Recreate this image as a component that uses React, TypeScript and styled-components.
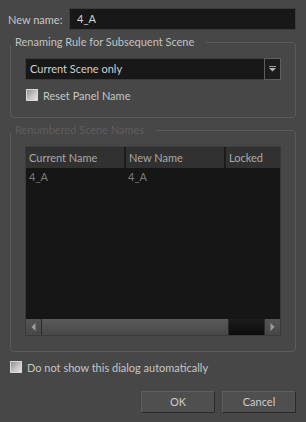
import React from 'react';
import styled, { createGlobalStyle } from 'styled-components';

const GlobalStyle = createGlobalStyle`
  html, body {
    margin: 0;
    padding: 0;
    background: #474747;
  }
  body {
    font-family: Lato, 'Open Sans', sans-serif;
    font-size: 11px;
    color: #c6c6c6;
  }
`;

export default function App() {
  return (
    <>
      <GlobalStyle />
      <Dialog>
        <NameRow>
          <Label>New name:</Label>
          <TextInput>4_A</TextInput>
        </NameRow>

        <Group>
          <Legend>Renaming Rule for Subsequent Scene</Legend>
          <Combo>
            <ComboText>Current Scene only</ComboText>
            <ComboButton>
              <svg width="9" height="7" viewBox="0 0 9 7">
                <rect x="1" y="0" width="7" height="1" fill="#9a9a9a" />
                <path d="M1 2 L8 2 L4.5 5.5 Z" fill="#b4b4b4" />
              </svg>
            </ComboButton>
          </Combo>
          <CheckRow>
            <CheckBox />
            <span>Reset Panel Name</span>
          </CheckRow>
        </Group>

        <Group $disabled>
          <Legend $disabled>Renumbered Scene Names</Legend>
          <Table>
            <HeaderRow>
              <HeaderCell $width={100}>Current Name</HeaderCell>
              <HeaderCell $width={100}>New Name</HeaderCell>
              <HeaderCell $width={55} $last>Locked</HeaderCell>
            </HeaderRow>
            <Body>
              <BodyRow>
                <BodyCell $width={100}>4_A</BodyCell>
                <BodyCell $width={100}>4_A</BodyCell>
                <BodyCell $width={55} />
              </BodyRow>
            </Body>
            <ScrollBar>
              <ScrollButton>
                <svg width="5" height="8" viewBox="0 0 5 8">
                  <path d="M4.5 0 L0.5 4 L4.5 8 Z" fill="#9c9c9c" />
                </svg>
              </ScrollButton>
              <ScrollHandle />
              <ScrollTrack />
              <ScrollButton>
                <svg width="5" height="8" viewBox="0 0 5 8">
                  <path d="M0.5 0 L4.5 4 L0.5 8 Z" fill="#9c9c9c" />
                </svg>
              </ScrollButton>
            </ScrollBar>
          </Table>
        </Group>

        <CheckRow $outer>
          <CheckBox />
          <span>Do not show this dialog automatically</span>
        </CheckRow>

        <Buttons>
          <Button>OK</Button>
          <Button>Cancel</Button>
        </Buttons>
      </Dialog>
    </>
  );
}

const Dialog = styled.div`
  width: 306px;
  height: 422px;
  box-sizing: border-box;
  padding: 8px 10px 9px 8px;
  display: flex;
  flex-direction: column;
`;

const NameRow = styled.div`
  display: flex;
  align-items: center;
  height: 22px;
`;

const Label = styled.span`
  width: 61px;
  flex-shrink: 0;
`;

const TextInput = styled.div`
  flex: 1;
  height: 22px;
  box-sizing: border-box;
  background: #181818;
  border: 1px solid #3c3c3c;
  padding-left: 7px;
  line-height: 20px;
  color: #d4d4d4;
`;

const Group = styled.fieldset<{ $disabled?: boolean }>`
  margin: 5px 0 0 2px;
  padding: 9px 14px 15px 14px;
  border: 1px solid #5b5b5b;
  border-radius: 4px;
  min-width: 0;
  min-height: 0;
  display: flex;
  flex-direction: column;
  flex: ${p => (p.$disabled ? '1' : '0 0 auto')};
`;

const Legend = styled.legend<{ $disabled?: boolean }>`
  margin-left: -14px;
  padding: 0 12px 0 4px;
  line-height: 14px;
  color: ${p => (p.$disabled ? '#5d5d5d' : '#c2c2c2')};
`;

const Combo = styled.div`
  display: flex;
  height: 22px;
  background: #181818;
  border: 1px solid #3c3c3c;
  box-sizing: border-box;
`;

const ComboText = styled.div`
  flex: 1;
  padding-left: 4px;
  line-height: 20px;
  color: #d0d0d0;
`;

const ComboButton = styled.div`
  width: 15px;
  margin: -1px -1px -1px 0;
  border: 1px solid #5e5e5e;
  background: #1c1c1c;
  display: flex;
  align-items: center;
  justify-content: center;
`;

const CheckRow = styled.label<{ $outer?: boolean }>`
  display: flex;
  align-items: center;
  gap: 5px;
  height: 14px;
  margin-top: 8px;
  margin-left: ${p => (p.$outer ? '2px' : '1px')};
`;

const CheckBox = styled.span`
  width: 12px;
  height: 12px;
  box-sizing: border-box;
  border: 1px solid #d6d6d6;
  background: linear-gradient(135deg, #8e8e8e 0%, #c4c4c4 55%, #e6e6e6 100%);
  flex-shrink: 0;
`;

const Table = styled.div`
  flex: 1;
  display: flex;
  flex-direction: column;
  background: #161616;
  border: 1px solid #3a3a3a;
  border-top: none;
`;

const HeaderRow = styled.div`
  display: flex;
  height: 22px;
  background: #313131;
  border-top: 1px solid #3d3d3d;
  box-sizing: border-box;
`;

const HeaderCell = styled.div<{ $width: number; $last?: boolean }>`
  width: ${p => p.$width}px;
  flex: ${p => (p.$last ? '1' : 'none')};
  box-sizing: border-box;
  padding-left: 3px;
  line-height: 21px;
  color: #a9a9a9;
  border-right: ${p => (p.$last ? 'none' : '2px solid #1b1b1b')};
`;

const Body = styled.div`
  flex: 1;
`;

const BodyRow = styled.div`
  display: flex;
  height: 18px;
`;

const BodyCell = styled.div<{ $width: number }>`
  width: ${p => p.$width}px;
  padding-left: 3px;
  line-height: 18px;
  color: #7a7a7a;
`;

const ScrollBar = styled.div`
  display: flex;
  height: 16px;
  background: #101010;
`;

const ScrollButton = styled.div`
  width: 16px;
  background: linear-gradient(#545454, #474747);
  border-right: 1px solid #2a2a2a;
  box-sizing: border-box;
  display: flex;
  align-items: center;
  justify-content: center;
  &:last-child {
    border-right: none;
    border-left: 1px solid #2a2a2a;
  }
`;

const ScrollHandle = styled.div`
  width: 186px;
  background: linear-gradient(#5a5a5a, #474747);
  border-right: 1px solid #2a2a2a;
`;

const ScrollTrack = styled.div`
  flex: 1;
  background: linear-gradient(#1c1c1c, #0c0c0c);
`;

const Buttons = styled.div`
  display: flex;
  justify-content: flex-end;
  gap: 7px;
  margin-top: 17px;
`;

const Button = styled.div`
  width: 74px;
  height: 22px;
  box-sizing: border-box;
  background: #4f4f4f;
  border: 1px solid #5d5d5d;
  border-right-color: #2b2b2b;
  border-bottom-color: #2b2b2b;
  text-align: center;
  line-height: 20px;
  color: #cdcdcd;
`;
